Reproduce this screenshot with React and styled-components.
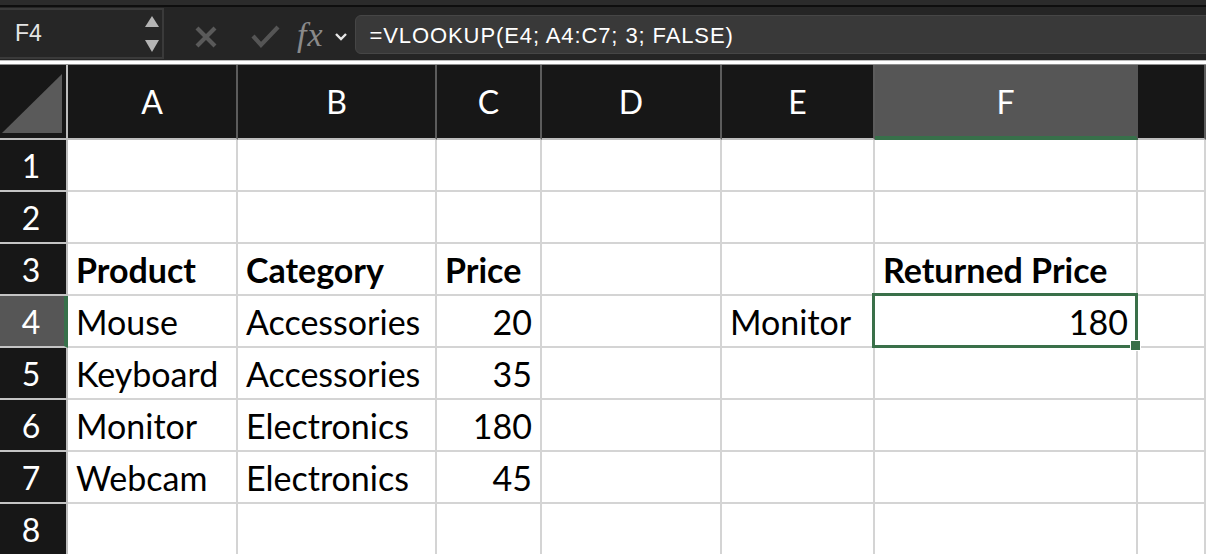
import styled, { createGlobalStyle } from "styled-components";

const GlobalStyle = createGlobalStyle`
  body {
    margin: 0;
    background: #ffffff;
    overflow: hidden;
  }
`;

const COLUMNS = [
  { key: "A", width: 170 },
  { key: "B", width: 199 },
  { key: "C", width: 105 },
  { key: "D", width: 180 },
  { key: "E", width: 153 },
  { key: "F", width: 263 },
  { key: "G", width: 68 },
];

const ROWS = [
  [],
  [],
  [
    { col: "A", text: "Product", bold: true },
    { col: "B", text: "Category", bold: true },
    { col: "C", text: "Price", bold: true },
    { col: "F", text: "Returned Price", bold: true },
  ],
  [
    { col: "A", text: "Mouse" },
    { col: "B", text: "Accessories" },
    { col: "C", text: "20", right: true },
    { col: "E", text: "Monitor" },
    { col: "F", text: "180", right: true },
  ],
  [
    { col: "A", text: "Keyboard" },
    { col: "B", text: "Accessories" },
    { col: "C", text: "35", right: true },
  ],
  [
    { col: "A", text: "Monitor" },
    { col: "B", text: "Electronics" },
    { col: "C", text: "180", right: true },
  ],
  [
    { col: "A", text: "Webcam" },
    { col: "B", text: "Electronics" },
    { col: "C", text: "45", right: true },
  ],
  [],
];

const App = () => {
  return (
    <Page>
      <GlobalStyle />
      <TopStrip />
      <Toolbar>
        <NameBox>
          <span>F4</span>
          <Spinner>
            <svg width="16" height="38" viewBox="0 0 16 38">
              <polygon points="8,1 15,12 1,12" fill="#b4b4b4" />
              <polygon points="1,25 15,25 8,37" fill="#b4b4b4" />
            </svg>
          </Spinner>
        </NameBox>
        <IconButton $left={31}>
          <svg width="22" height="22" viewBox="0 0 22 22">
            <path
              d="M2 2 L20 20 M20 2 L2 20"
              stroke="#5a5a5a"
              strokeWidth="4.2"
              fill="none"
            />
          </svg>
        </IconButton>
        <IconButton $left={34}>
          <svg width="29" height="24" viewBox="0 0 29 24">
            <path
              d="M2 11 L10 20 L27 2"
              stroke="#555555"
              strokeWidth="4.2"
              fill="none"
            />
          </svg>
        </IconButton>
        <Fx>fx</Fx>
        <Chevron>
          <svg width="14" height="10" viewBox="0 0 14 10">
            <path
              d="M2 2 L7 7 L12 2"
              stroke="#e6e6e6"
              strokeWidth="2.4"
              fill="none"
            />
          </svg>
        </Chevron>
        <FormulaBox>=VLOOKUP(E4; A4:C7; 3; FALSE)</FormulaBox>
      </Toolbar>
      <Divider />
      <Sheet>
        <Corner>
          <svg width="66" height="73" viewBox="0 0 66 73">
            <polygon points="62,9 62,68 2,68" fill="#5a5a5a" />
          </svg>
        </Corner>
        {COLUMNS.map((c) => (
          <ColHeader key={c.key} $active={c.key === "F"}>
            {c.key === "G" ? "" : c.key}
          </ColHeader>
        ))}
        {ROWS.map((cells, i) => {
          const row = i + 1;
          return [
            <RowHeader key={`h${row}`} $active={row === 4}>
              {row}
            </RowHeader>,
            ...COLUMNS.map((c) => {
              const cell = cells.find((x) => x.col === c.key);
              const selected = row === 4 && c.key === "F";
              return (
                <Cell
                  key={`${c.key}${row}`}
                  $bold={cell?.bold}
                  $right={cell?.right}
                >
                  {cell?.text}
                  {selected && (
                    <>
                      <Selection />
                      <Handle />
                    </>
                  )}
                </Cell>
              );
            }),
          ];
        })}
      </Sheet>
    </Page>
  );
};

const Page = styled.div`
  width: 1206px;
  height: 554px;
  overflow: hidden;
`;

const TopStrip = styled.div`
  height: 5px;
  background: #2b2b2b;
  border-bottom: 2px solid #0e0e0e;
`;

const Toolbar = styled.div`
  height: 53px;
  background: #252525;
  display: flex;
  align-items: center;
  overflow: hidden;
`;

const NameBox = styled.div`
  box-sizing: border-box;
  align-self: flex-start;
  margin-top: 1px;
  width: 164px;
  height: 51px;
  border: 2px solid #3a3a3a;
  border-left: none;
  background: #262626;
  display: flex;
  align-items: center;
  justify-content: space-between;
  padding: 0 1px 0 15px;
  font-family: "Liberation Sans", Arial, sans-serif;
  font-size: 23px;
  color: #e4e4e4;
`;

const Spinner = styled.div`
  display: flex;
  align-items: center;
  margin-right: 1px;
`;

const IconButton = styled.div`
  display: flex;
  align-items: center;
  margin-left: ${(p) => p.$left}px;
  margin-top: 6px;
`;

const Fx = styled.div`
  margin-left: 17px;
  font-family: "Liberation Serif", "Times New Roman", serif;
  font-style: italic;
  font-size: 34px;
  line-height: 1;
  letter-spacing: 1px;
  color: #8a8a8a;
  margin-top: 2px;
`;

const Chevron = styled.div`
  display: flex;
  margin-left: 10px;
  margin-top: 6px;
`;

const FormulaBox = styled.div`
  box-sizing: border-box;
  align-self: flex-start;
  margin: 8px -20px 0 7px;
  flex: 1;
  height: 39px;
  border-radius: 6px;
  background: #393939;
  border: 1px solid #464646;
  display: flex;
  align-items: center;
  padding: 2px 0 0 14px;
  font-family: "Liberation Sans", Arial, sans-serif;
  font-size: 22px;
  letter-spacing: 0.9px;
  color: #ffffff;
`;

const Divider = styled.div`
  height: 3px;
  background: #ffffff;
  border-top: 1px solid #bdbdbd;
  border-bottom: 1px solid #8e8e8e;
`;

const Sheet = styled.div`
  display: grid;
  grid-template-columns: 68px ${COLUMNS.map((c) => `${c.width}px`).join(" ")};
  grid-template-rows: 75px repeat(8, 52px);
`;

const HeaderBase = styled.div`
  box-sizing: border-box;
  display: flex;
  align-items: center;
  justify-content: center;
  background: #171717;
  color: #ffffff;
  font-family: Lato, "Open Sans", sans-serif;
  font-size: 32px;
`;

const Corner = styled(HeaderBase)`
  border-right: 2px solid #bdbdbd;
  border-bottom: 2px solid #bdbdbd;
  align-items: stretch;
  justify-content: flex-start;
`;

const ColHeader = styled(HeaderBase)`
  background: ${(p) => (p.$active ? "#565656" : "#171717")};
  border-right: 2px solid ${(p) => (p.$active ? "#565656" : "#5c5c5c")};
  border-bottom: ${(p) =>
    p.$active ? "4px solid #37704a" : "2px solid #bdbdbd"};
  padding-top: ${(p) => (p.$active ? "2px" : "0")};
`;

const RowHeader = styled(HeaderBase)`
  background: ${(p) => (p.$active ? "#565656" : "#171717")};
  border-right: ${(p) =>
    p.$active ? "4px solid #37704a" : "2px solid #bdbdbd"};
  border-bottom: 2px solid #c4c4c4;
  padding-right: ${(p) => (p.$active ? "2px" : "4px")};
`;

const Cell = styled.div`
  box-sizing: border-box;
  position: relative;
  display: flex;
  align-items: center;
  justify-content: ${(p) => (p.$right ? "flex-end" : "flex-start")};
  padding: 0 8px;
  border-right: 2px solid #d4d4d4;
  border-bottom: 2px solid #d4d4d4;
  background: #ffffff;
  color: #000000;
  font-family: Lato, "Open Sans", sans-serif;
  font-size: 34px;
  font-weight: ${(p) => (p.$bold ? 700 : 400)};
  white-space: nowrap;
`;

const Selection = styled.div`
  position: absolute;
  z-index: 1;
  top: -3px;
  left: -3px;
  right: -2px;
  bottom: -2px;
  border: 3px solid #3a7049;
  pointer-events: none;
`;

const Handle = styled.div`
  position: absolute;
  z-index: 2;
  right: -5px;
  bottom: -5px;
  width: 9px;
  height: 9px;
  background: #3a7049;
  border: 1px solid #ffffff;
`;

export default App;
